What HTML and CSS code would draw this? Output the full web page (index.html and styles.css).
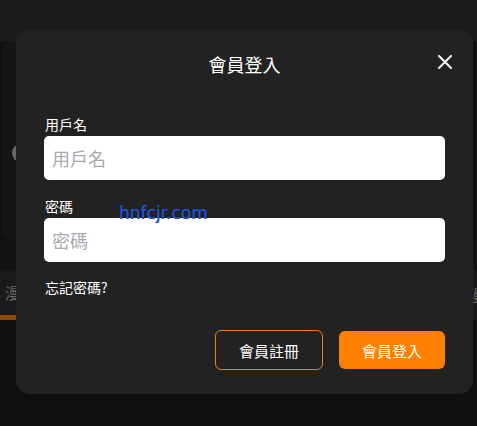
FILE: index.html
```html
<!DOCTYPE html>
<html>
  <head>
    <title>會員登入</title>
    <link rel="stylesheet" href="styles.css">
  </head>
  <body>
    <!-- page behind the dialog (dimmed) -->
    <div class="page">
      <div class="page_top"></div>
      <div class="page_card">
        <span class="page_avatar"></span>
        <span class="page_bar"></span>
      </div>
      <div class="page_gap"></div>
      <div class="page_tabs">
        <span class="page_tab page_tab_on">漫</span>
        <span class="page_tab page_tab_right">漫</span>
      </div>
    </div>

    <!-- login dialog -->
    <div class="mask">
      <div class="dlg">
        <div class="dlg_head">
          <h3 class="dlg_title">會員登入</h3>
          <button class="dlg_close" aria-label="close">
            <svg width="16" height="16" viewBox="0 0 16 16">
              <path d="M2 2 L14 14 M14 2 L2 14" stroke="#fff" stroke-width="2" stroke-linecap="round"/>
            </svg>
          </button>
        </div>

        <div class="dlg_field">
          <label class="dlg_label" for="user">用戶名</label>
          <input class="dlg_input" id="user" type="text" placeholder="用戶名">
        </div>

        <div class="dlg_field">
          <label class="dlg_label" for="pass">密碼</label>
          <input class="dlg_input" id="pass" type="password" placeholder="密碼">
        </div>

        <a class="dlg_forgot" href="#">忘記密碼?</a>

        <div class="dlg_btns">
          <button class="btn btn_line">會員註冊</button>
          <button class="btn btn_fill">會員登入</button>
        </div>
      </div>
    </div>

    <div class="mark">hnfcjr.com</div>
  </body>
</html>
```

FILE: styles.css
```css
html, body {
  margin: 0;
  padding: 0;
}

body {
  width: 477px;
  height: 426px;
  overflow: hidden;
  background: #0f0f0f;
  font-family: "Noto Sans CJK TC", "Noto Sans", sans-serif;
  position: relative;
}

/* page behind */
.page_top {
  height: 42px;
  background: #1b1b1b;
}

.page_card {
  height: 198px;
  margin: 0 4px 0 2px;
  background: #151515;
  border-radius: 8px;
  position: relative;
}

.page_avatar {
  position: absolute;
  left: 10px;
  top: 102px;
  width: 16px;
  height: 18px;
  border-radius: 50%;
  background: #6a6a6a;
}

.page_bar {
  position: absolute;
  left: 14px;
  top: 158px;
  width: 2px;
  height: 22px;
  background: #5a3410;
}

.page_gap {
  height: 30px;
  background: #131313;
}

.page_tabs {
  height: 50px;
  background: #1a1a1a;
  display: flex;
  justify-content: space-between;
  align-items: center;
}

.page_tab {
  color: #6a6a6a;
  font-size: 15px;
  padding: 0 5px;
  line-height: 50px;
}

.page_tab_on {
  border-bottom: 5px solid #8a4a0c;
  line-height: 45px;
  align-self: flex-start;
  height: 45px;
}

.page_tab_right {
  margin-right: -12px;
}

/* dialog */
.mask {
  position: absolute;
  left: 0;
  top: 0;
  right: 0;
  bottom: 0;
}

.dlg {
  position: absolute;
  left: 16px;
  top: 30px;
  width: 457px;
  height: 364px;
  box-sizing: border-box;
  padding: 20px 28px 24px 28px;
  background: #222222;
  border-radius: 14px;
  display: flex;
  flex-direction: column;
}

.dlg_head {
  position: relative;
  height: 28px;
  margin-bottom: 36px;
}

.dlg_title {
  margin: 0;
  text-align: center;
  color: #ffffff;
  font-size: 18px;
  font-weight: normal;
  line-height: 28px;
}

.dlg_close {
  position: absolute;
  right: -9px;
  top: 3px;
  width: 18px;
  height: 18px;
  padding: 0;
  border: none;
  background: none;
  cursor: pointer;
  display: flex;
  align-items: center;
  justify-content: center;
}

.dlg_field {
  display: flex;
  flex-direction: column;
  margin-bottom: 16px;
}

.dlg_label {
  color: #ffffff;
  font-size: 14px;
  line-height: 20px;
  margin-bottom: 2px;
  padding-left: 1px;
}

.dlg_input {
  height: 44px;
  box-sizing: border-box;
  border: none;
  border-radius: 5px;
  background: #ffffff;
  padding: 0 8px;
  font-family: inherit;
  font-size: 18px;
  outline: none;
}

.dlg_input::placeholder {
  color: #a9a9b1;
}

.dlg_forgot {
  color: #ffffff;
  font-size: 14px;
  line-height: 20px;
  text-decoration: none;
  padding-left: 1px;
  margin-top: -1px;
}

.dlg_btns {
  margin-top: auto;
  display: flex;
  justify-content: flex-end;
  align-items: center;
  gap: 16px;
}

.btn {
  font-family: inherit;
  font-size: 15px;
  color: #ffffff;
  border-radius: 6px;
  cursor: pointer;
  padding: 0;
}

.btn_line {
  width: 108px;
  height: 40px;
  background: transparent;
  border: 1px solid #e8801c;
}

.btn_fill {
  width: 106px;
  height: 38px;
  background: #ff7f00;
  border: none;
}

/* watermark */
.mark {
  position: absolute;
  left: 119px;
  top: 203px;
  font-family: "DejaVu Sans", sans-serif;
  font-size: 17px;
  line-height: 20px;
  color: #2458dc;
  text-shadow: 0 0 1px #0a2a7a;
}
```
